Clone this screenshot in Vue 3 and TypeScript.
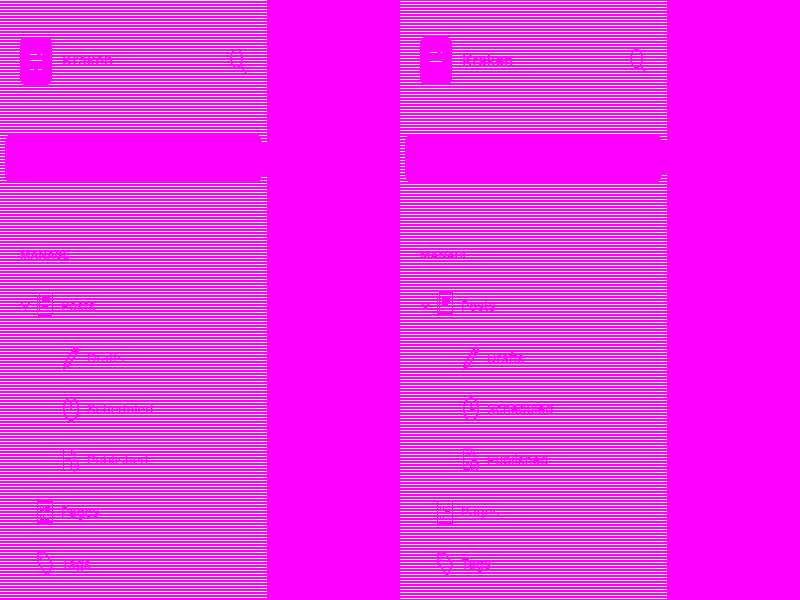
<script setup lang="ts">
interface NavItem {
  label: string
  icon: string
}

interface Panel {
  id: string
  phase: 'even' | 'odd'
}

const panels: Panel[] = [
  { id: 'left', phase: 'even' },
  { id: 'right', phase: 'odd' },
]

const children: NavItem[] = [
  { label: 'Drafts', icon: 'pencil' },
  { label: 'Scheduled', icon: 'clock' },
  { label: 'Published', icon: 'published' },
]

const others: NavItem[] = [
  { label: 'Pages', icon: 'pages' },
  { label: 'Tags', icon: 'tag' },
]
</script>

<template>
  <main class="screen">
    <section v-for="panel in panels" :key="panel.id" class="panel">
      <aside class="sidebar" :class="panel.phase">
        <header class="brand">
          <svg class="logo" viewBox="0 0 32 48" aria-hidden="true">
            <rect width="32" height="48" rx="5" ry="6" class="solid" />
            <path d="M10 15h7v3h-7zM21 15h1v3h-1zM10 23h12v2H10zM10 31h4v2h-4zM18 31h4v2h-4z" class="paper" />
          </svg>
          <span class="name">Kraken</span>
          <button class="search" type="button" aria-label="Search">
            <svg class="icon" viewBox="0 0 16 24" aria-hidden="true">
              <ellipse cx="6.5" cy="9.5" rx="5.7" ry="9" />
              <path d="M11 17l5 7" />
            </svg>
          </button>
        </header>

        <a class="current" href="#" aria-label="Home" aria-current="page">
          <span class="marker"></span>
        </a>

        <nav class="nav">
          <h2 class="heading">MANAGE</h2>
          <ul class="list">
            <li>
              <a class="row parent" href="#">
                <svg class="chevron" viewBox="0 0 11 8" aria-hidden="true">
                  <path d="M1.500 1L5.500 6.500L9.500 1" />
                </svg>
                <svg class="icon" viewBox="0 2 16 24" aria-hidden="true">
                  <path class="fine" d="M2.500 20V.5h13v20q0 3-2 3H2.500q-2 0-2-3V3.500" />
                  <path class="solid" d="M2 0h14v1H2zM5 5h8v5H5zM5 12h6v3H5zM1 21h14v1l-1 2H1z" />
                </svg>
                <span>Posts</span>
              </a>
              <ul class="list nested">
                <li v-for="item in children" :key="item.label">
                  <a class="row child" href="#">
                    <svg class="icon" viewBox="0 0 16 24" aria-hidden="true">
                      <template v-if="item.icon === 'pencil'">
                        <path d="M1 23L2 17L11.500 2Q13 .5 14.500 2.500Q15.500 4 14.500 6L5 20.500zM10 4l3 4M11 3l3 4" />
                      </template>
                      <template v-else-if="item.icon === 'clock'">
                        <ellipse cx="8" cy="12" rx="7.300" ry="11.200" />
                        <path d="M8 5v7.500h4" />
                      </template>
                      <template v-else>
                        <path class="fine" d="M7 21.500H.5V1H9l3 4v5M8.500 1v5h3" />
                        <path d="M3 7h5M3 11h5M3 16h3" />
                        <ellipse cx="11.500" cy="17.500" rx="3.700" ry="5.300" />
                        <path class="fine" d="M9.500 18l1.500 2l2.500-5" />
                      </template>
                    </svg>
                    <span>{{ item.label }}</span>
                  </a>
                </li>
              </ul>
            </li>
            <li v-for="item in others" :key="item.label">
              <a class="row top" href="#">
                <svg class="icon" viewBox="0 0 16 24" aria-hidden="true">
                  <template v-if="item.icon === 'pages'">
                    <path class="fine" d="M.5 24V1h15v23" />
                    <path class="solid" d="M0 0h16v2H0zM0 22h16v2H0zM3 6h1v5H3zM6 6h1v5H6zM3 10h4v1H3zM8 6h5v2H8zM8 10h5v2H8zM3 15h1v5H3zM6 15h1v5H6zM3 19h4v1H3zM8 15h5v1H8zM8 19h4v1H8z" />
                  </template>
                  <template v-else>
                    <path d="M1 1h7L15 11.500Q15.500 13 15 14.500L11 22Q10 23.500 9 22L1 10.500z" />
                    <path d="M4 4.500v3" />
                  </template>
                </svg>
                <span>{{ item.label }}</span>
              </a>
            </li>
          </ul>
        </nav>
      </aside>
    </section>
  </main>
</template>

<style>
body {
  margin: 0;
  background: #ff00ff;
}
</style>

<style scoped>
.screen {
  display: grid;
  grid-template-columns: 1fr 1fr;
  min-height: 100vh;
  background: #ff00ff;
  color: #ff00ff;
  font-family: "Inter", sans-serif;
  font-size: 13px;
  font-weight: 500;
  line-height: 24px;
}

.sidebar {
  position: relative;
  box-sizing: border-box;
  width: 66.75%;
  min-height: 100%;
  padding-top: 37px;
  background: #ffffff;
}

/* Scan lines laid over the whole sidebar */
.sidebar::after {
  content: "";
  position: absolute;
  inset: 0;
  pointer-events: none;
}

.even::after {
  background: repeating-linear-gradient(to bottom, transparent 0 1px, #ff00ff 1px 3px);
}

.odd::after {
  background: repeating-linear-gradient(to bottom, #ff00ff 0 1px, transparent 1px 2px, #ff00ff 2px 3px);
}

.brand {
  display: flex;
  align-items: center;
  gap: 10px;
  padding: 0 21px 0 20px;
}

.logo {
  width: 32px;
  height: 48px;
}

.name {
  flex: 1;
  font-size: 15px;
  font-weight: 600;
}

.search {
  display: flex;
  padding: 0;
  border: 0;
  background: none;
  color: inherit;
}

.icon {
  flex: none;
  width: 16px;
  height: 24px;
  overflow: visible;
}

.chevron {
  flex: none;
  width: 11px;
  height: 8px;
}

svg {
  fill: none;
  stroke: #ff00ff;
  stroke-width: 1.7;
}

.fine {
  stroke-width: 1;
}

.solid {
  fill: #ff00ff;
  stroke: none;
}

.paper {
  fill: #ffffff;
  stroke: none;
}

.current {
  display: flex;
  align-items: center;
  justify-content: flex-end;
  height: 49px;
  margin: 49px 5px 0;
  border-radius: 6px / 9px;
  background: #ff00ff;
}

.marker {
  width: 5px;
  height: 33px;
  margin-right: -5px;
  background: #ff00ff;
}

.heading {
  margin: 60px 0 15px;
  padding-left: 20px;
  font-size: 11px;
  font-weight: 700;
  line-height: 24px;
}

.list {
  display: flex;
  flex-direction: column;
  gap: 4px;
  margin: 0;
  padding: 0;
  list-style: none;
}

.nested {
  gap: 3px;
  padding-top: 4px;
}

.row {
  display: flex;
  align-items: center;
  gap: 8px;
  height: 48px;
  color: inherit;
  text-decoration: none;
}

.parent {
  padding-left: 20px;
}

.parent .chevron {
  margin-right: -2px;
}

.child {
  padding-left: 63px;
}

.top {
  padding-left: 37px;
}
</style>
